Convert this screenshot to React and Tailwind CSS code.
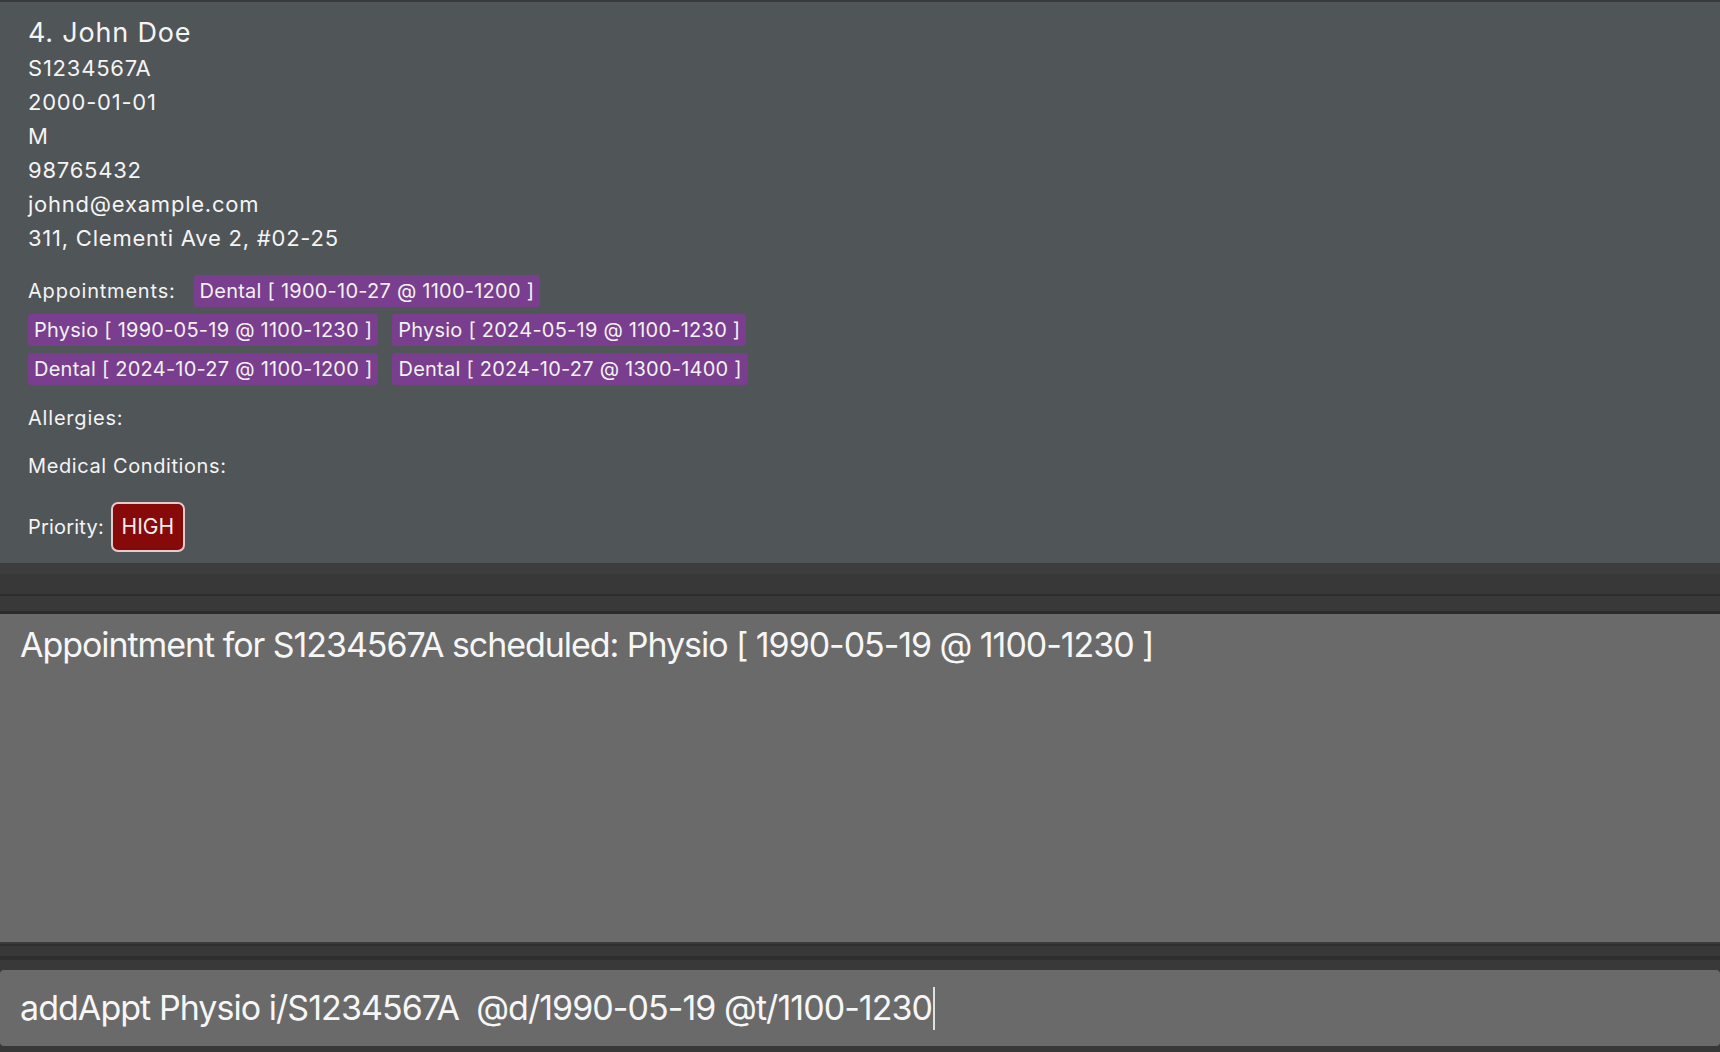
import React from 'react';

const appointments = [
  'Dental [ 1900-10-27 @ 1100-1200 ]',
  'Physio [ 1990-05-19 @ 1100-1230 ]',
  'Physio [ 2024-05-19 @ 1100-1230 ]',
  'Dental [ 2024-10-27 @ 1100-1200 ]',
  'Dental [ 2024-10-27 @ 1300-1400 ]',
];

const details = [
  'S1234567A',
  '2000-01-01',
  'M',
  '98765432',
  'johnd@example.com',
  '311, Clementi Ave 2, #02-25',
];

function PersonCard() {
  return (
    <div className="bg-[#505558] h-[561px] pl-[28px] pt-[13px] text-[#f4f4f4]">
      <div className="text-[27px] leading-[36px] h-[36px] tracking-[0.03em]">4. John Doe</div>
      {details.map((d) => (
        <div key={d} className="text-[22px] leading-[34px] h-[34px] tracking-[0.035em]">{d}</div>
      ))}

      <div className="mt-[20px] flex flex-wrap items-center gap-x-[14px] gap-y-[7px] w-[760px]">
        <span className="text-[20px] leading-[32px] h-[32px] mr-[4px] tracking-[0.04em]">Appointments:</span>
        {appointments.map((a) => (
          <span
            key={a}
            className="h-[32px] flex items-center px-[6px] rounded-[3px] bg-[#793e8d] text-[20px] tracking-[0.012em] text-[#f2f2f2]"
          >
            {a}
          </span>
        ))}
      </div>

      <div className="mt-[19px] text-[20px] leading-[28px] h-[28px] tracking-[0.04em]">Allergies:</div>
      <div className="mt-[20px] text-[20px] leading-[28px] h-[28px] tracking-[0.03em]">Medical Conditions:</div>

      <div className="mt-[22px] flex items-center gap-[7px] h-[50px]">
        <span className="text-[20px] leading-[28px] tracking-[0.01em]">Priority:</span>
        <span className="w-[74px] h-[50px] flex items-center justify-center rounded-[7px] border-2 border-[#e4cccc] bg-[#870a0a] text-[21px] text-[#f4eeee]">
          HIGH
        </span>
      </div>
    </div>
  );
}

export default function App() {
  return (
    <div
      className="w-[1720px] h-[1052px] bg-[#383838] flex flex-col overflow-hidden"
      style={{ fontFamily: 'Inter, "Open Sans", sans-serif' }}
    >
      <div className="h-[2px] bg-[#3a3a3a]" />
      <PersonCard />

      <div className="h-[11px] bg-[#3d3d3d]" />
      <div className="h-[20px] bg-[#383838]" />
      <div className="h-[2px] bg-[#2d2d2d]" />
      <div className="h-[15px] bg-[#393939]" />
      <div className="h-[3px] bg-[#2b2b2b]" />

      <div className="h-[328px] bg-[#6a6a6a] pl-[20px] pt-[8px] text-[#f6f6f6] text-[34px] leading-[46px] tracking-[-0.031em]">
        Appointment for S1234567A scheduled: Physio [ 1990-05-19 @ 1100-1230 ]
      </div>

      <div className="h-[2px] bg-[#3a3a3a]" />
      <div className="h-[2px] bg-[#2f2f2f]" />
      <div className="h-[10px] bg-[#383838]" />
      <div className="h-[4px] bg-[#2e2e2e]" />
      <div className="h-[10px] bg-[#393939]" />

      <div className="h-[76px] bg-[#6a6a6a] rounded-[4px] pl-[20px] flex items-center text-[#f6f6f6] text-[34px] leading-[46px] tracking-[-0.028em]">
        <span className="whitespace-pre">addAppt Physio i/S1234567A  @d/1990-05-19 @t/1100-1230</span>
        <span className="w-[2px] h-[43px] bg-[#e0e0e0] ml-[1px]" />
      </div>

      <div className="flex-1 bg-[#383838]" />
    </div>
  );
}
